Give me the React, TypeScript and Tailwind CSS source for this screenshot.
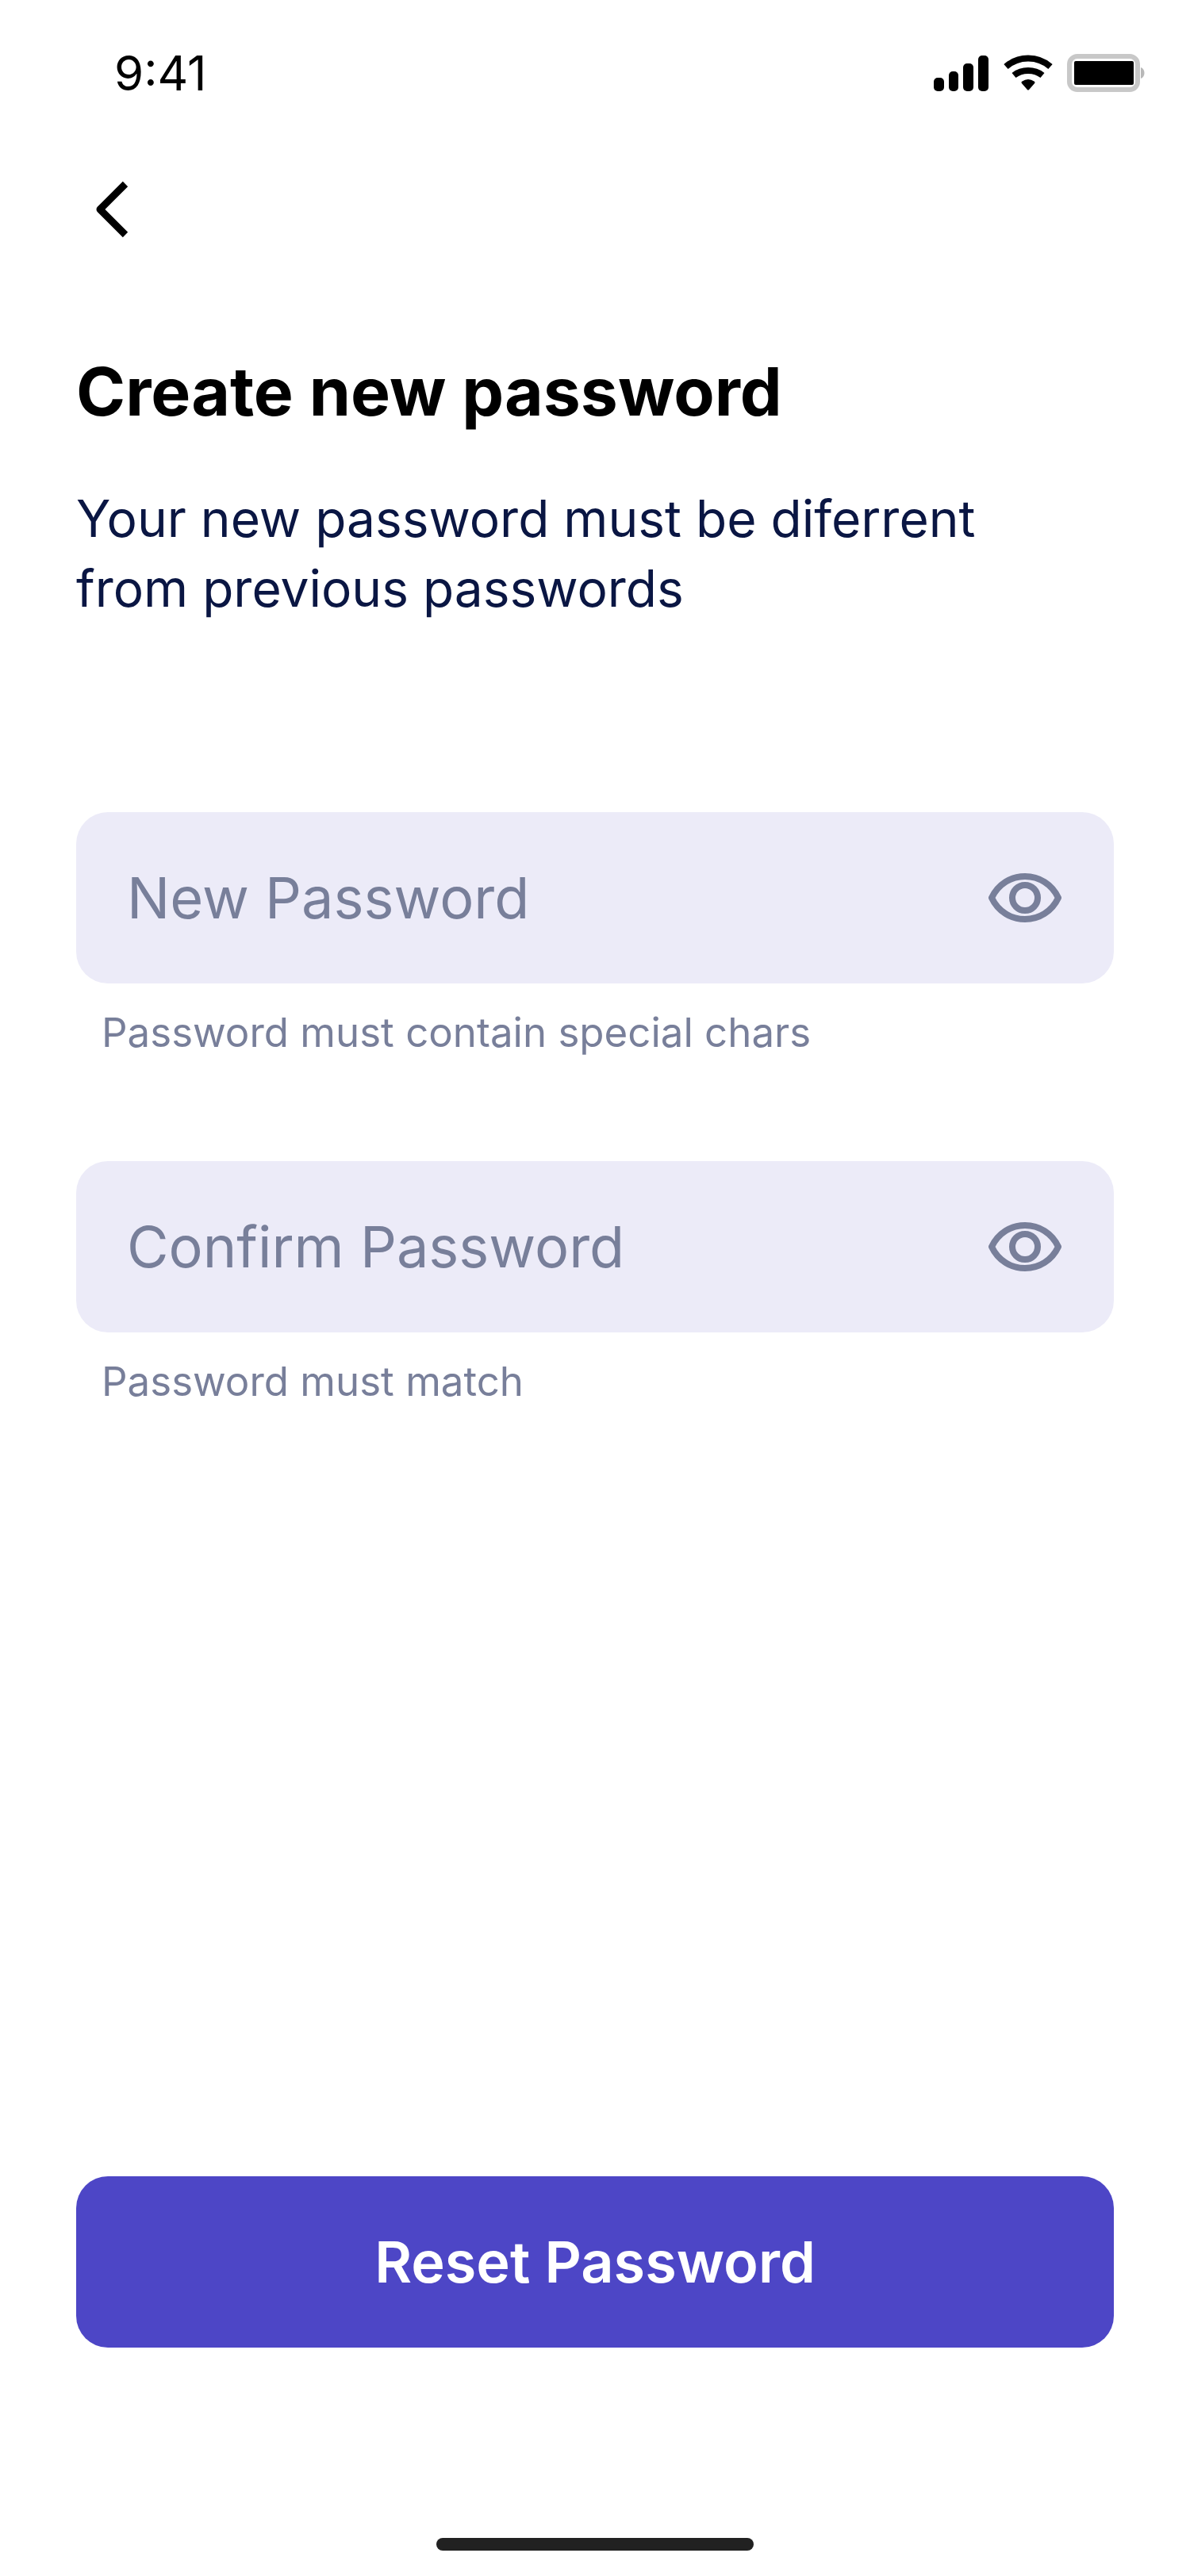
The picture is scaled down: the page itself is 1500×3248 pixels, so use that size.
import React, { useState } from "react";

function SignalIcon() {
  return (
    <svg aria-hidden="true" className="h-12 w-[72px]" viewBox="0 0 72 48">
      <rect x="1" y="30" width="13" height="17" rx="5" />
      <rect x="20" y="22" width="12" height="25" rx="5" />
      <rect x="38" y="12" width="13" height="35" rx="5" />
      <rect x="57" y="2" width="13" height="45" rx="5" />
    </svg>
  );
}

function WifiIcon() {
  return (
    <svg aria-hidden="true" className="h-12 w-16" viewBox="0 0 64 48" fill="none" stroke="black" strokeWidth="8">
      <path d="M4 16C20 2 44 2 60 16" />
      <path d="M14 27C24 19 40 19 50 27" />
      <path
        d="M25 36Q32 31 39 36L32 44Z"
        fill="black"
        strokeWidth="3"
        strokeLinejoin="round"
      />
    </svg>
  );
}

function BatteryIcon() {
  return (
    <svg aria-hidden="true" className="h-12 w-[100px]" viewBox="0 0 100 48">
      <rect x="4" y="3" width="86" height="42" rx="10" fill="none" stroke="#c8c8c8" strokeWidth="6" />
      <rect x="10" y="9" width="75" height="30" rx="2" />
      <path d="M94 17C100 19 100 29 94 31Z" fill="#b8b8b8" />
    </svg>
  );
}

function BackIcon() {
  return (
    <svg aria-hidden="true" className="size-24" viewBox="0 0 96 96" fill="none" stroke="black" strokeWidth="9">
      <path d="M62 16L30 48L62 80" strokeLinejoin="round" />
    </svg>
  );
}

function EyeIcon() {
  return (
    <svg aria-hidden="true" className="h-16 w-24" viewBox="0 0 96 64" fill="none" stroke="#787f9a" strokeWidth="8">
      <path
        d="M6 32C14 15 30 5 48 5S82 15 90 32C82 49 66 59 48 59S14 49 6 32Z"
        strokeLinejoin="round"
      />
      <circle cx="48" cy="32" r="16" />
    </svg>
  );
}

type PasswordFieldProps = { id: string; label: string; hint: string };

function PasswordField({ id, label, hint }: PasswordFieldProps) {
  const [visible, setVisible] = useState(false);
  return (
    <div>
      <div className="flex h-[216px] items-center rounded-[40px] bg-[#ecebf8] px-16">
        <input
          id={id}
          aria-label={label}
          aria-describedby={id + "-hint"}
          type={visible ? "text" : "password"}
          placeholder={label}
          className="min-w-0 flex-1 bg-transparent text-[72px] text-[#787f9a] outline-none placeholder:text-[#787f9a]"
        />
        <button
          type="button"
          aria-label={visible ? "Hide password" : "Show password"}
          onClick={() => setVisible(!visible)}
        >
          <EyeIcon />
        </button>
      </div>
      <p id={id + "-hint"} className="mt-[30px] px-8 text-[51px] leading-[64px] text-[#787f9a]">
        {hint}
      </p>
    </div>
  );
}

export default function App() {
  return (
    <main className="flex min-h-screen flex-col bg-white font-['Inter',sans-serif] text-black">
      <header className="flex items-center justify-between pt-14 pr-14 pl-36 text-[60px] leading-[72px]">
        <span>9:41</span>
        <div className="flex items-center gap-4">
          <SignalIcon />
          <WifiIcon />
          <BatteryIcon />
        </div>
      </header>

      <nav className="flex px-24 pt-[88px]">
        <button type="button" aria-label="Back">
          <BackIcon />
        </button>
      </nav>

      <form className="flex flex-1 flex-col px-24 pt-32" onSubmit={(e) => e.preventDefault()}>
        <h1 className="text-[84px] leading-[108px] font-bold">Create new password</h1>
        <p className="mt-[62px] max-w-[1200px] text-[64px] leading-[88px] text-[#0a1643]">
          Your new password must be diferrent from previous passwords
        </p>
        <div className="mt-[238px] flex flex-col gap-[130px]">
          <PasswordField id="new-password" label="New Password" hint="Password must contain special chars" />
          <PasswordField id="confirm-password" label="Confirm Password" hint="Password must match" />
        </div>
        <button
          type="submit"
          className="mt-auto h-[216px] rounded-[40px] bg-[#4d46c6] text-[72px] font-semibold text-white"
        >
          Reset Password
        </button>
      </form>

      <footer className="flex justify-center pt-60 pb-8">
        <div className="h-4 w-[400px] rounded-full bg-[#212121]" />
      </footer>
    </main>
  );
}
